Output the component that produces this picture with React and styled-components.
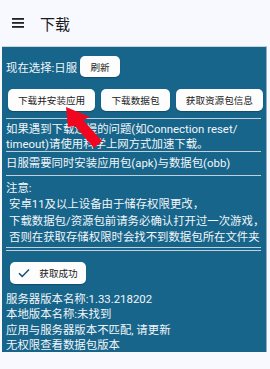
import React from "react"
import styled, { createGlobalStyle } from "styled-components"

const GlobalStyle = createGlobalStyle`
	html, body {
		margin: 0;
		padding: 0;
		background: #f8f9fe;
	}
	body {
		font-family: "Roboto", "Noto Sans CJK SC", sans-serif;
		width: 270px;
		height: 369px;
		overflow: hidden;
	}
`

const Page = styled.div`
	position: relative;
	width: 270px;
	height: 369px;
	background: #f8f9fe;
`

const Header = styled.header`
	height: 46px;
	display: flex;
	align-items: center;
	padding-left: 12px;
	box-sizing: border-box;
	.title {
		margin-left: 15px;
		font-size: 15px;
		color: #1c1c1c;
		font-family: "Noto Sans CJK SC", sans-serif;
	}
`

const Panel = styled.section`
	margin-left: 2px;
	width: 265px;
	height: 306px;
	box-sizing: border-box;
	background: #17658a;
	border-right: 1px solid #8fb0c4;
	border-top: 1px solid #c9d5de;
	padding: 9px 3px 0 4px;
	color: #f2f6f9;
	font-size: 11.4px;
`

const Row = styled.div`
	display: flex;
	align-items: center;
	gap: ${p => p.gap || 0}px;
	margin-top: ${p => p.top || 0}px;
	height: ${p => p.height || 22}px;
`

const Button = styled.button`
	height: ${p => p.h || 22}px;
	width: ${p => p.w}px;
	border: none;
	border-radius: 5px;
	background: #fdfdfd;
	color: #222;
	font-family: "Noto Sans CJK SC", sans-serif;
	font-size: 9.6px;
	padding: 0;
	display: flex;
	align-items: center;
	justify-content: center;
	gap: 9px;
	box-shadow: 0 1px 1px rgba(0, 0, 0, 0.25);
`

const Divider = styled.div`
	height: 1px;
	background: #c2d0da;
	margin: ${p => p.m || "0"};
	margin-right: 2px;
`

const Text = styled.div`
	line-height: ${p => p.lh || 15}px;
	margin-top: ${p => p.top || 0}px;
	padding-left: ${p => p.indent || 0}px;
	white-space: nowrap;
`

const Arrow = styled.svg`
	position: absolute;
	left: 0;
	top: 0;
	pointer-events: none;
`

const Menu = () => (
	<svg width="13" height="10" viewBox="0 0 13 10">
		<rect x="0" y="0" width="12" height="1.8" fill="#222" />
		<rect x="0" y="4" width="12" height="1.8" fill="#222" />
		<rect x="0" y="8" width="12" height="1.8" fill="#222" />
	</svg>
)

const Check = () => (
	<svg width="12" height="10" viewBox="0 0 12 10">
		<path d="M1 5.2 4.2 8.4 11 1.4" fill="none" stroke="#1b4f78" strokeWidth="1.5" />
	</svg>
)

export default function App() {
	return (
		<Page>
			<GlobalStyle />
			<Header>
				<Menu />
				<span className="title">下载</span>
			</Header>
			<Panel>
				<Row height={21} gap={3}>
					<span>现在选择:日服</span>
					<Button w={40} h={21}>刷新</Button>
				</Row>
				<Row top={12} gap={6} style={{ paddingLeft: 2 }}>
					<Button w={89}>下载并安装应用</Button>
					<Button w={70}>下载数据包</Button>
					<Button w={89}>获取资源包信息</Button>
				</Row>
				<Divider m="7px 0 0 0" />
				<Text lh={14.5} top={3}>如果遇到下载过慢的问题(如Connection reset/</Text>
				<Text lh={14.5}>timeout)请使用科学上网方式加速下载。</Text>
				<Divider />
				<Text lh={15} top={4}>日服需要同时安装应用包(apk)与数据包(obb)</Text>
				<Divider m="4px 0 0 0" />
				<Text lh={16.5} top={3.5}>注意:</Text>
				<Text lh={16.5} indent={3}>安卓11及以上设备由于储存权限更改，</Text>
				<Text lh={16.5} indent={3}>下载数据包/资源包前请务必确认打开过一次游戏，</Text>
				<Text lh={16.5} indent={3}>否则在获取存储权限时会找不到数据包所在文件夹</Text>
				<Divider m="1px 0 0 0" />
				<Divider m="2px 0 0 0" />
				<Row top={11} style={{ paddingLeft: 4 }}>
					<Button w={76}>
						<Check />
						获取成功
					</Button>
				</Row>
				<Text lh={15.5} top={8}>服务器版本名称:1.33.218202</Text>
				<Text lh={15.5}>本地版本名称:未找到</Text>
				<Text lh={15}>应用与服务器版本不匹配, 请更新</Text>
				<Text lh={15}>无权限查看数据包版本</Text>
			</Panel>
			<Arrow width="270" height="369" viewBox="0 0 270 369">
				<polygon
					points="66,107 90,117 83,120 102,141 94,148 75,126 68,127"
					fill="#f0061e"
				/>
			</Arrow>
		</Page>
	)
}
